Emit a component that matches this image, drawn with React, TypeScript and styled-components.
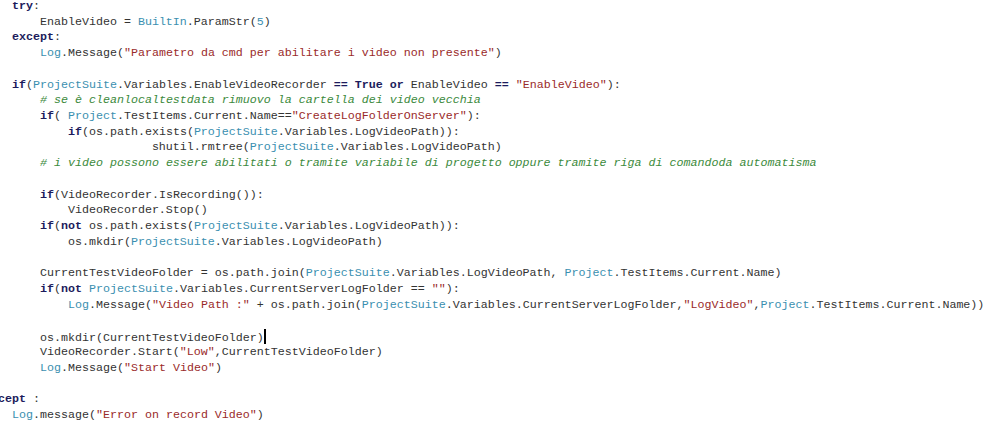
import React from 'react';
import styled, { createGlobalStyle } from 'styled-components';

const GlobalStyle = createGlobalStyle`
    html, body {
        margin: 0;
        padding: 0;
        background: #ffffff;
        overflow: hidden;
    }
`;

type Kind = 'p' | 'k' | 'o' | 's' | 'c' | 'n' | 'caret';
type Token = [Kind, string];

const colors: Record<Kind, string> = {
    p: '#333333',
    k: '#1c1c5c',
    o: '#3b8fb0',
    s: '#9a2a2a',
    c: '#3c8a3c',
    n: '#3b8fb0',
    caret: '#000'
};

const Editor = styled.div`
    margin: -1px 0 0 -16px;
    font-family: 'Liberation Mono', 'Courier New', monospace;
    font-size: 11.67px;
    line-height: 15.73px;
    color: #333333;
`;

const Line = styled.div`
    height: 15.73px;
    white-space: pre;
`;

const Tok = styled.span<{ $kind: Kind }>`
    color: ${p => colors[p.$kind]};
    font-weight: ${p => (p.$kind === 'k' ? 700 : 400)};
    font-style: ${p => (p.$kind === 'c' ? 'italic' : 'normal')};
`;

const Caret = styled.span`
    display: inline-block;
    width: 2px;
    height: 15px;
    background: #000;
    vertical-align: -3px;
`;

const PS: Token = ['o', 'ProjectSuite'];
const PR: Token = ['o', 'Project'];
const LOG: Token = ['o', 'Log'];

const code: Token[][] = [
    [['p', '    '], ['k', 'try'], ['p', ':']],
    [['p', '        EnableVideo = '], ['o', 'BuiltIn'], ['p', '.ParamStr('], ['n', '5'], ['p', ')']],
    [['p', '    '], ['k', 'except'], ['p', ':']],
    [['p', '        '], LOG, ['p', '.Message('], ['s', '"Parametro da cmd per abilitare i video non presente"'], ['p', ')']],
    [],
    [['p', '    '], ['k', 'if'], ['p', '('], PS, ['p', '.Variables.EnableVideoRecorder '], ['k', '=='], ['p', ' '], ['k', 'True'], ['p', ' '], ['k', 'or'], ['p', ' EnableVideo '], ['k', '=='], ['p', ' '], ['s', '"EnableVideo"'], ['p', '):']],
    [['p', '        '], ['c', '# se è cleanlocaltestdata rimuovo la cartella dei video vecchia']],
    [['p', '        '], ['k', 'if'], ['p', '( '], PR, ['p', '.TestItems.Current.Name=='], ['s', '"CreateLogFolderOnServer"'], ['p', '):']],
    [['p', '            '], ['k', 'if'], ['p', '(os.path.exists('], PS, ['p', '.Variables.LogVideoPath)):']],
    [['p', '                        shutil.rmtree('], PS, ['p', '.Variables.LogVideoPath)']],
    [['p', '        '], ['c', '# i video possono essere abilitati o tramite variabile di progetto oppure tramite riga di comandoda automatisma']],
    [],
    [['p', '        '], ['k', 'if'], ['p', '(VideoRecorder.IsRecording()):']],
    [['p', '            VideoRecorder.Stop()']],
    [['p', '        '], ['k', 'if'], ['p', '('], ['k', 'not'], ['p', ' os.path.exists('], PS, ['p', '.Variables.LogVideoPath)):']],
    [['p', '            os.mkdir('], PS, ['p', '.Variables.LogVideoPath)']],
    [],
    [['p', '        CurrentTestVideoFolder = os.path.join('], PS, ['p', '.Variables.LogVideoPath, '], PR, ['p', '.TestItems.Current.Name)']],
    [['p', '        '], ['k', 'if'], ['p', '('], ['k', 'not'], ['p', ' '], PS, ['p', '.Variables.CurrentServerLogFolder == '], ['s', '""'], ['p', '):']],
    [['p', '            '], LOG, ['p', '.Message('], ['s', '"Video Path :"'], ['p', ' + os.path.join('], PS, ['p', '.Variables.CurrentServerLogFolder,'], ['s', '"LogVideo"'], ['p', ','], PR, ['p', '.TestItems.Current.Name))']],
    [],
    [['p', '        os.mkdir(CurrentTestVideoFolder)'], ['caret', '']],
    [['p', '        VideoRecorder.Start('], ['s', '"Low"'], ['p', ',CurrentTestVideoFolder)']],
    [['p', '        '], LOG, ['p', '.Message('], ['s', '"Start Video"'], ['p', ')']],
    [],
    [['k', 'except'], ['p', ' :']],
    [['p', '    '], LOG, ['p', '.message('], ['s', '"Error on record Video"'], ['p', ')']]
];

const App = () => {
    return (
        <>
            <GlobalStyle />
            <Editor>
                {code.map((line, i) => (
                    <Line key={i}>
                        {line.length === 0
                            ? ' '
                            : line.map(([kind, text], j) =>
                                  kind === 'caret' ? (
                                      <Caret key={j} />
                                  ) : (
                                      <Tok key={j} $kind={kind}>
                                          {text}
                                      </Tok>
                                  )
                              )}
                    </Line>
                ))}
            </Editor>
        </>
    );
};

export default App;
